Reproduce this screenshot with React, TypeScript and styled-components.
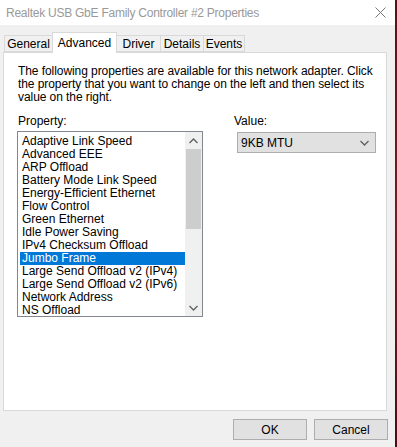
import React from "react";
import styled, { createGlobalStyle } from "styled-components";

const Global = createGlobalStyle`
  html, body { margin: 0; padding: 0; }
  body {
    background: linear-gradient(180deg, #5e1016, #7a1a20 50%, #4d0c12);
    width: 397px; height: 447px; overflow: hidden;
  }
  * { box-sizing: border-box; }
`;

const Win = styled.div`
  width: 395px;
  height: 447px;
  background: #f0f0f0;
  display: flex;
  flex-direction: column;
  font-family: "Liberation Sans", Arial, sans-serif;
  font-size: 12px;
  color: #000;
`;

const TitleBar = styled.div`
  height: 25px;
  flex: none;
  background: #fff;
  display: flex;
  align-items: center;
  justify-content: space-between;
  padding: 0 9px 0 6px;
`;

const Title = styled.span`
  color: #999;
  font-size: 12px;
  letter-spacing: -0.25px;
  white-space: nowrap;
`;

const Body = styled.div`
  padding: 7px 0 0 3px;
  display: flex;
  flex-direction: column;
`;

const TabStrip = styled.div`
  display: flex;
  align-items: flex-end;
  height: 20px;
  padding-left: 1px;
  position: relative;
  z-index: 1;
`;

const Tab = styled.div<{ $w: number; $active?: boolean }>`
  width: ${(p) => p.$w}px;
  height: ${(p) => (p.$active ? 21 : 17)}px;
  margin-bottom: ${(p) => (p.$active ? -1 : 0)}px;
  background: ${(p) => (p.$active ? "#fff" : "#f0f0f0")};
  border: 1px solid #d9d9d9;
  border-bottom: ${(p) => (p.$active ? "none" : "1px solid #d9d9d9")};
  display: flex;
  align-items: center;
  justify-content: center;
  white-space: nowrap;
  position: relative;
  z-index: ${(p) => (p.$active ? 2 : 1)};
  & + & { margin-left: -1px; }
`;

const Panel = styled.div`
  width: 384px;
  height: 359px;
  background: #fff;
  border: 1px solid #d9d9d9;
  padding: 12px 0 0 14px;
  display: flex;
  flex-direction: column;
`;

const Desc = styled.div`
  line-height: 13px;
  letter-spacing: -0.07px;
  white-space: nowrap;
`;

const FieldRow = styled.div`
  display: flex;
  margin-top: 11px;
`;

const Column = styled.div<{ $gap?: number }>`
  display: flex;
  flex-direction: column;
  margin-left: ${(p) => p.$gap ?? 0}px;
`;

const Label = styled.div`
  line-height: 13px;
`;

const ListBox = styled.div`
  width: 186px;
  height: 186px;
  margin: 3px 0 0 -1px;
  border: 1px solid #828790;
  background: #fff;
  display: flex;
`;

const Items = styled.div`
  flex: 1;
  padding: 3px 0 0 2px;
  overflow: hidden;
`;

const Item = styled.div<{ $sel?: boolean }>`
  height: 13px;
  line-height: 13px;
  padding-left: 2px;
  white-space: nowrap;
  background: ${(p) => (p.$sel ? "#0078d7" : "transparent")};
  color: ${(p) => (p.$sel ? "#fff" : "#000")};
`;

const ScrollBar = styled.div`
  width: 17px;
  background: #f0f0f0;
  display: flex;
  flex-direction: column;
`;

const ScrollBtn = styled.div`
  height: 17px;
  display: flex;
  align-items: center;
  justify-content: center;
`;

const Track = styled.div`
  flex: 1;
  padding: 0 1px;
`;

const Thumb = styled.div`
  height: 80px;
  background: #cdcdcd;
`;

const Combo = styled.div`
  width: 139px;
  height: 21px;
  margin: 4px 0 0 3px;
  background: #e1e1e1;
  border: 1px solid #adadad;
  display: flex;
  align-items: center;
  justify-content: space-between;
  padding: 0 6px 0 3px;
`;

const Footer = styled.div`
  display: flex;
  justify-content: flex-end;
  gap: 7px;
  padding: 8px 7px 0 0;
`;

const Button = styled.div`
  width: 74px;
  height: 21px;
  background: #e1e1e1;
  border: 1px solid #adadad;
  display: flex;
  align-items: center;
  justify-content: center;
`;

const Chevron = ({ up }: { up?: boolean }) => (
  <svg width="9" height="6" viewBox="0 0 9 6">
    <polyline
      points={up ? "0.5,5 4.5,1 8.5,5" : "0.5,1 4.5,5 8.5,1"}
      fill="none"
      stroke="#606060"
      strokeWidth="1.3"
    />
  </svg>
);

const items = [
  "Adaptive Link Speed",
  "Advanced EEE",
  "ARP Offload",
  "Battery Mode Link Speed",
  "Energy-Efficient Ethernet",
  "Flow Control",
  "Green Ethernet",
  "Idle Power Saving",
  "IPv4 Checksum Offload",
  "Jumbo Frame",
  "Large Send Offload v2 (IPv4)",
  "Large Send Offload v2 (IPv6)",
  "Network Address",
  "NS Offload",
];

const tabs: [string, number][] = [
  ["General", 49],
  ["Advanced", 65],
  ["Driver", 45],
  ["Details", 44],
  ["Events", 42],
];

export default function App() {
  return (
    <>
      <Global />
      <Win>
        <TitleBar>
          <Title>Realtek USB GbE Family Controller #2 Properties</Title>
          <svg width="11" height="11" viewBox="0 0 11 11">
            <path d="M0.5 0.5 L10.5 10.5 M10.5 0.5 L0.5 10.5" stroke="#777" strokeWidth="1" />
          </svg>
        </TitleBar>
        <Body>
          <TabStrip>
            {tabs.map(([t, w]) => (
              <Tab key={t} $w={w} $active={t === "Advanced"}>
                {t}
              </Tab>
            ))}
          </TabStrip>
          <Panel>
            <Desc>
              The following properties are available for this network adapter. Click
              <br />
              the property that you want to change on the left and then select its
              <br />
              value on the right.
            </Desc>
            <FieldRow>
              <Column>
                <Label>Property:</Label>
                <ListBox>
                  <Items>
                    {items.map((i) => (
                      <Item key={i} $sel={i === "Jumbo Frame"}>
                        {i}
                      </Item>
                    ))}
                  </Items>
                  <ScrollBar>
                    <ScrollBtn>
                      <Chevron up />
                    </ScrollBtn>
                    <Track>
                      <Thumb />
                    </Track>
                    <ScrollBtn>
                      <Chevron />
                    </ScrollBtn>
                  </ScrollBar>
                </ListBox>
              </Column>
              <Column $gap={31}>
                <Label>Value:</Label>
                <Combo>
                  <span>9KB MTU</span>
                  <Chevron />
                </Combo>
              </Column>
            </FieldRow>
          </Panel>
          <Footer>
            <Button>OK</Button>
            <Button>Cancel</Button>
          </Footer>
        </Body>
      </Win>
    </>
  );
}
